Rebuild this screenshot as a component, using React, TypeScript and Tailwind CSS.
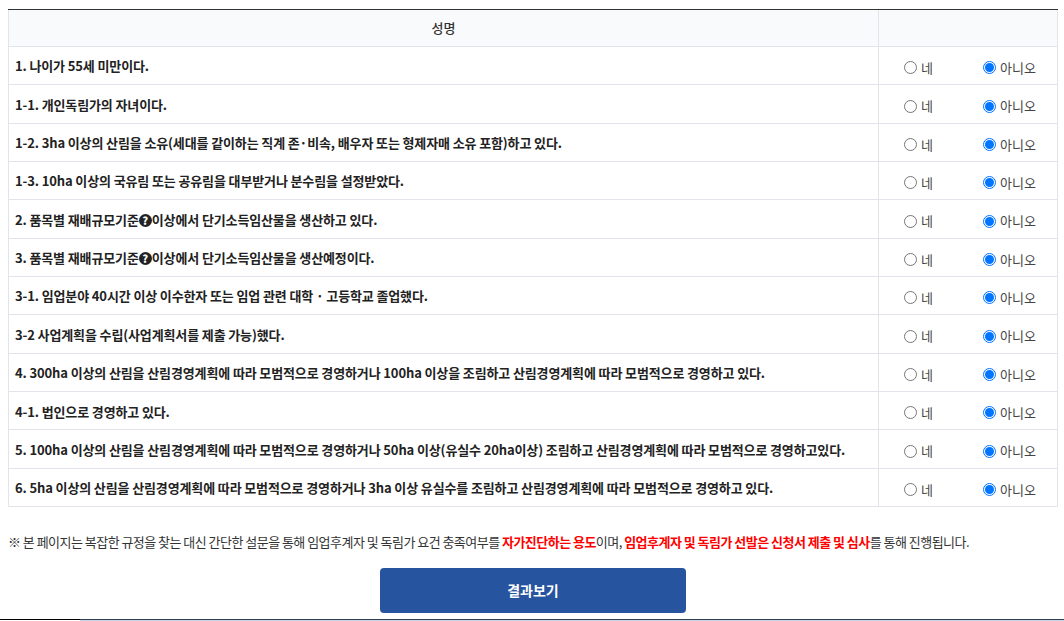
const rows = [
  "1. 나이가 55세 미만이다.",
  "1-1. 개인독림가의 자녀이다.",
  "1-2. 3ha 이상의 산림을 소유(세대를 같이하는 직계 존·비속, 배우자 또는 형제자매 소유 포함)하고 있다.",
  "1-3. 10ha 이상의 국유림 또는 공유림을 대부받거나 분수림을 설정받았다.",
  "2. 품목별 재배규모기준?이상에서 단기소득임산물을 생산하고 있다.",
  "3. 품목별 재배규모기준?이상에서 단기소득임산물을 생산예정이다.",
  "3-1. 임업분야 40시간 이상 이수한자 또는 임업 관련 대학 · 고등학교 졸업했다.",
  "3-2 사업계획을 수립(사업계획서를 제출 가능)했다.",
  "4. 300ha 이상의 산림을 산림경영계획에 따라 모범적으로 경영하거나 100ha 이상을 조림하고 산림경영계획에 따라 모범적으로 경영하고 있다.",
  "4-1. 법인으로 경영하고 있다.",
  "5. 100ha 이상의 산림을 산림경영계획에 따라 모범적으로 경영하거나 50ha 이상(유실수 20ha이상) 조림하고 산림경영계획에 따라 모범적으로 경영하고있다.",
  "6. 5ha 이상의 산림을 산림경영계획에 따라 모범적으로 경영하거나 3ha 이상 유실수를 조림하고 산림경영계획에 따라 모범적으로 경영하고 있다.",
];

const Radio = ({ on }: { on?: boolean }) => (
  <span className={`w-[13px] h-[13px] rounded-full border flex items-center justify-center bg-white ${on ? "border-[#0075ff]" : "border-[#767676]"}`}>
    {on && <span className="w-[9px] h-[9px] rounded-full bg-[#0075ff]" />}
  </span>
);

const Label = ({ text }: { text: string }) => {
  const parts = text.split("?");
  return (
    <span>
      {parts[0]}
      {parts.length > 1 && (
        <span className="inline-flex w-[13px] h-[13px] rounded-full bg-[#222] text-white text-[11px] font-black items-center justify-center align-[0px] leading-none">?</span>
      )}
      {parts[1]}
    </span>
  );
};

export default function App() {
  return (
    <div className="h-[621px] overflow-hidden bg-white pt-[9px] text-[#333] font-['Noto_Sans_CJK_KR','Noto_Sans',sans-serif] text-[13px]">
      <div className="ml-2 w-[1050px] border-t border-t-[#333]">
        <div className="flex h-[37px] border-b border-x border-[#e1e4ea] bg-[#f9fafc] font-medium">
          <div className="flex-1 flex items-center justify-center">성명</div>
          <div className="w-[179px] border-l border-[#e1e4ea]" />
        </div>
        {rows.map((r) => (
          <div key={r} className="flex h-[38.35px] border-b border-x border-[#e1e4ea]">
            <div className="flex-1 flex items-center pl-[6px] pt-[1px] font-bold text-[#222] tracking-[-0.13px]">
              <Label text={r} />
            </div>
            <div className="w-[179px] border-l border-[#e1e4ea] flex items-center pl-[25px] pt-[4px] text-[#444]">
              <div className="flex items-center gap-1 w-[79px]"><Radio />네</div>
              <div className="flex items-center gap-1"><Radio on />아니오</div>
            </div>
          </div>
        ))}
      </div>
      <p className="ml-2 mt-[25px] tracking-[-0.53px] text-[#333]">
        ※ 본 페이지는 복잡한 규정을 찾는 대신 간단한 설문을 통해 임업후계자 및 독림가 요건 충족여부를 <b className="text-[#f00]">자가진단하는 용도</b>이며, <b className="text-[#f00]">임업후계자 및 독림가 선발은 신청서 제출 및 심사</b>를 통해 진행됩니다.
      </p>
      <div className="ml-2 w-[1050px] flex justify-center mt-[16px]">
        <button className="w-[306px] h-[45px] bg-[#27549f] text-white font-bold text-[14px] rounded-sm">결과보기</button>
      </div>
      <div className="mt-[6px] flex h-[1px]">
        <div className="w-[80px] bg-black" />
        <div className="flex-1 bg-[#2f3e52]" />
      </div>
      <div className="pl-[80px] h-[1px]">
        <div className="h-full bg-[#c9d6e8]" />
      </div>
    </div>
  );
}
